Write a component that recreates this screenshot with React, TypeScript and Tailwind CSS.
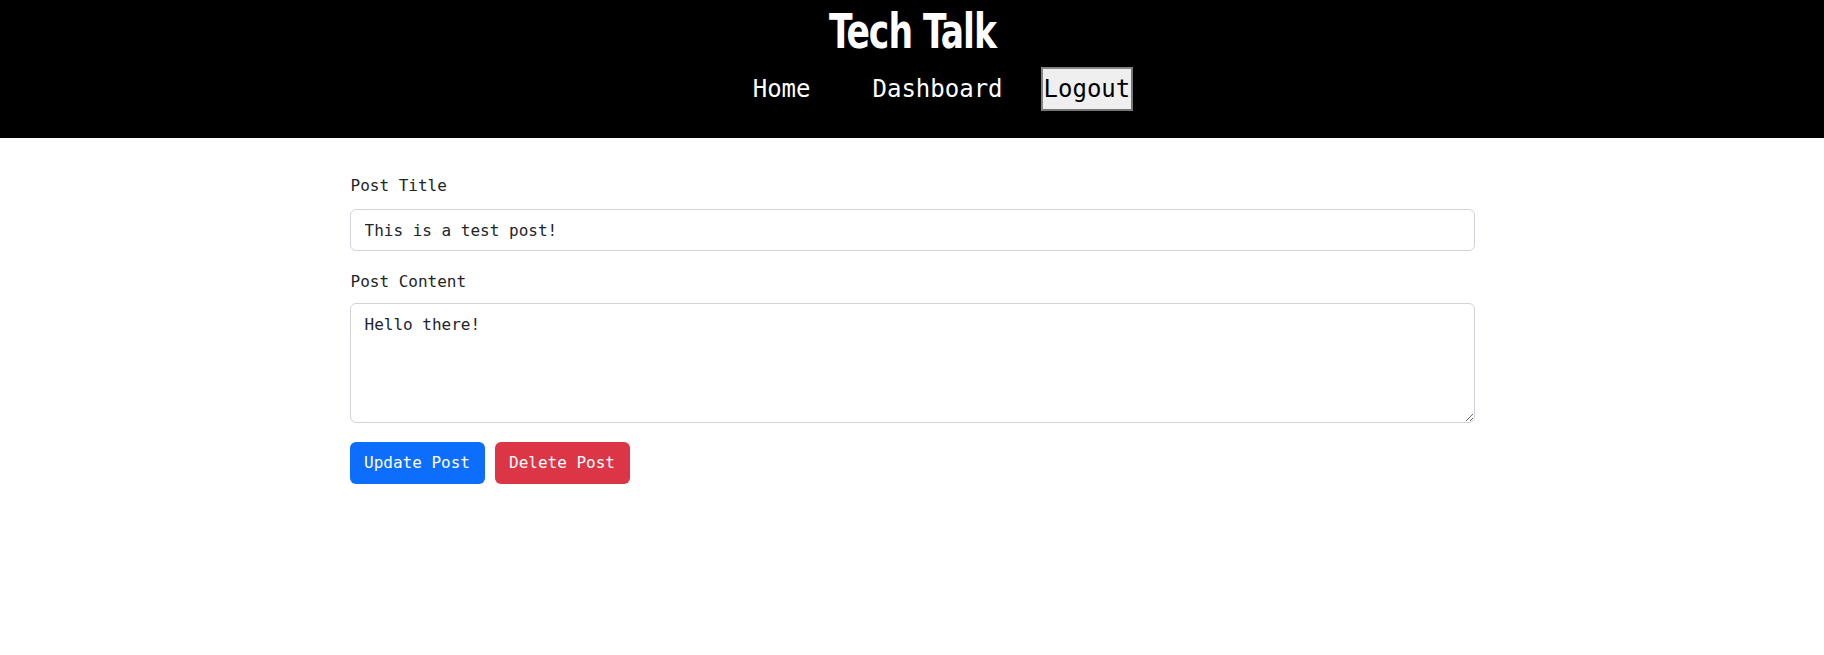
import React from 'react';

const mono = "font-['DejaVu_Sans_Mono','Liberation_Mono',monospace]";

const Header: React.FC = () => {
  return (
    <header className="bg-black flex flex-col items-center pt-[7px] pb-[27px]">
      <h1 className="text-white text-[48px] leading-[48px] font-extrabold tracking-tight font-['Impact','DejaVu_Sans_Condensed','DejaVu_Sans',sans-serif] inline-block scale-x-[0.8]">
        Tech Talk
      </h1>
      <nav className={`mt-[12px] flex items-baseline pl-[62px] text-[24px] ${mono}`}>
        <a href="#" className="text-white leading-[28px]">Home</a>
        <a href="#" className="text-white leading-[28px] ml-[62px]">Dashboard</a>
        <button className="ml-[38px] bg-[#efefef] text-black leading-[28px] px-[1px] py-[6px] border-2 border-[#767676] border-t-[#858585] border-l-[#858585]">
          Logout
        </button>
      </nav>
    </header>
  );
};

const EditPostForm: React.FC = () => {
  return (
    <form className={`w-[1125px] mx-auto pt-[36px] text-[16px] text-[#212529] ${mono}`}>
      <label className="block leading-6 pl-[1px]">Post Title</label>
      <input
        type="text"
        defaultValue="This is a test post!"
        className="mt-[11px] block w-full h-[42px] px-[14px] border border-[#ced4da] rounded-md text-[#212529] outline-none"
      />
      <label className="block leading-6 mt-[19px] pl-[1px]">Post Content</label>
      <textarea
        defaultValue="Hello there!"
        className="mt-[9px] block w-full h-[120px] px-[14px] py-[9px] border border-[#ced4da] rounded-md text-[#212529] outline-none"
      />
      <div className="mt-[19px] flex gap-[10px]">
        <button type="button" className="w-[135px] h-[42px] rounded-md bg-[#0d6efd] text-white">
          Update Post
        </button>
        <button type="button" className="w-[135px] h-[42px] rounded-md bg-[#dc3545] text-white">
          Delete Post
        </button>
      </div>
    </form>
  );
};

export default function App() {
  return (
    <div className="min-h-[655px] bg-white">
      <Header />
      <EditPostForm />
    </div>
  );
}
